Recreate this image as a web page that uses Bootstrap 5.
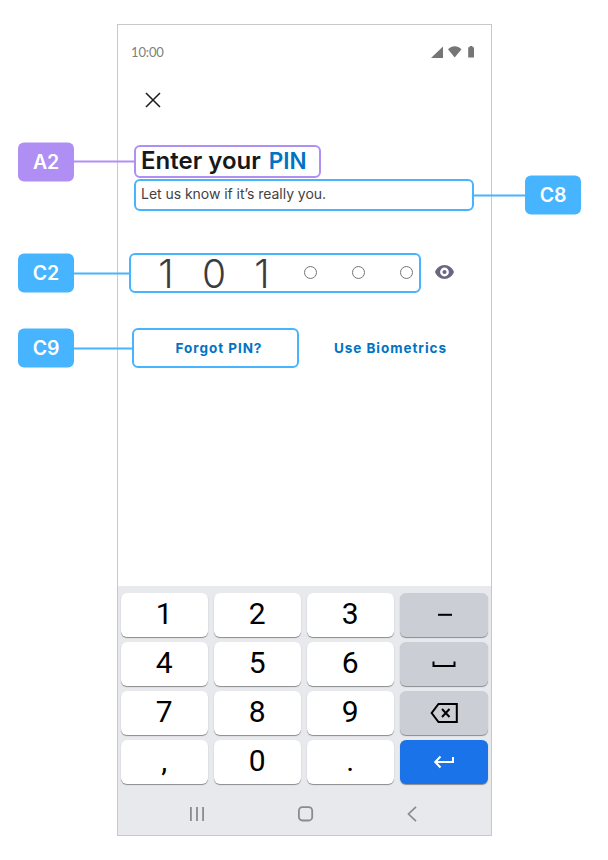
<!DOCTYPE html>
<html lang="en">
<head>
<meta charset="utf-8">
<meta name="viewport" content="width=device-width, initial-scale=1">
<title>Enter your PIN</title>
<link href="https://cdn.jsdelivr.net/npm/bootstrap@5.3.0/dist/css/bootstrap.min.css" rel="stylesheet">
<style>
  :root { --sky: #46b4ff; --violet: #b08ff5; --link: #0073c4; }
  body { font-family: Inter, "Liberation Sans", sans-serif; background: #fff; }
  svg { display: block; flex: none; }
  .page { width: 608px; height: 860px; padding: 24px 0 0 117px; overflow: hidden; }
  .phone { width: 375px; height: 812px; border: 1px solid #c8c8ca; }
  .status { height: 53px; padding: 0 16px 0 13px; color: #757575; }
  .clock { font: 400 13px/16px Lato, sans-serif; color: #808080; letter-spacing: -.15px; padding-top: 1px; }
  .close-btn { margin: 14px 0 0 27px; width: 16px; height: 16px; }
  .outlined { border: 2px solid var(--tone, var(--sky)); border-radius: 6px; }
  .violet { --tone: var(--violet); }
  .callout { top: 50%; transform: translateY(-50%); letter-spacing: -.1px; }
  .callout-start { right: 100%; }
  .callout-end { left: 100%; }
  .tag { width: 56px; height: 39px; border-radius: 6px; background: var(--tone, var(--sky)); color: #fff; font-size: 19.5px; font-weight: 600; line-height: 39px; text-align: center; }
  .wire { height: 2px; background: var(--tone, var(--sky)); }
  .w-62px { width: 62px; } .w-57px { width: 57px; } .w-53px { width: 53px; } .w-60px { width: 60px; }
  .heading { margin: 37px 0 0 16px; width: 187px; height: 33px; padding: 0 0 2px 5px; }
  .heading h1 { font-size: 24px; line-height: 28px; font-weight: 600; color: #18181a; }
  .heading .accent { font-size: 22.5px; line-height: 27px; color: var(--link); padding-left: 8px; }
  .hint { margin: 1px 0 0 16px; width: 340px; height: 32px; padding-left: 5px; font-size: 14px; letter-spacing: -.04px; line-height: 26px; color: #424244; }
  .pin-row { margin: 42px 0 0 11px; }
  .pin { width: 292px; height: 40px; padding-left: 11px; }
  .cell { flex: none; width: 48px; height: 36px; font-size: 39px; line-height: 38px; font-weight: 300; color: #3c3c3e; }
  .cell:nth-child(n+4) { height: 35px; }
  .cell:nth-child(6) { margin-right: -14px; }
  .dot { width: 13px; height: 13px; border: 1px solid #747474; border-radius: 50%; }
  .eye { margin-left: 14px; margin-bottom: 2px; }
  .actions { margin: 35px 0 0 14px; color: var(--link); font-size: 13.5px; font-weight: 700; letter-spacing: .95px; }
  .forgot { width: 167px; height: 40px; padding: 1px 0 0 7px; }
  .biometrics { margin-left: 35px; padding-top: 1px; }
  .keyboard { height: 249px; background: #e8e9ed; padding: 7px 3px 0; }
  .keys { display: grid; grid-template-columns: repeat(4, 88px); grid-auto-rows: 44px; gap: 5px; }
  .key { background: #fff; border-radius: 6px; box-shadow: 0 1px 1px #898a8d; color: #000; font: 400 30px/42px Roboto, sans-serif; text-align: center; }
  .key:not(.key-alt):not(.key-go) { padding-right: 1px; margin-right: .6px; }
  .key-alt { background: #cbced5; }
  .key-go { background: #1a73e8; }
  .android-nav { height: 59px; padding: 0 69px; }
</style>
</head>
<body>
<main class="page">
  <div class="phone d-flex flex-column">
    <div class="status d-flex align-items-center justify-content-between">
      <span class="clock">10:00</span>
      <svg width="44" height="12" viewBox="0 0 44 12" fill="#757575"><path d="M0 12 12 .5V12z"/><path d="M17 3.200C21-.7 26.500-.7 30.500 3.200L23.700 11.500z"/><path d="M37.200 1.200h1.500V0h2.800v1.200h1.500v10.300h-5.800z"/></svg>
    </div>
    <button type="button" class="close-btn btn p-0 border-0" aria-label="Close">
      <svg width="16" height="16" viewBox="0 0 16 16" fill="none" stroke="#1b1b1b" stroke-width="1.500"><path d="M1 1l14 14M15 1 1 15"/></svg>
    </button>

    <div class="heading outlined violet position-relative d-flex align-items-center">
      <h1 class="m-0 text-nowrap">Enter your</h1><h1 class="accent m-0">PIN</h1>
      <div class="callout callout-start position-absolute d-flex align-items-center"><span class="tag">A2</span><span class="wire w-62px"></span></div>
    </div>
    <div class="hint outlined position-relative">Let us know if it’s really you.
      <div class="callout callout-end position-absolute d-flex align-items-center"><span class="wire w-53px"></span><span class="tag">C8</span></div>
    </div>

    <div class="pin-row d-flex align-items-center">
      <div class="pin outlined position-relative d-flex">
        <span class="cell text-center">1</span><span class="cell text-center">0</span><span class="cell text-center">1</span>
        <span class="cell d-flex align-items-center justify-content-center"><i class="dot"></i></span>
        <span class="cell d-flex align-items-center justify-content-center"><i class="dot"></i></span>
        <span class="cell d-flex align-items-center justify-content-center"><i class="dot"></i></span>
        <div class="callout callout-start position-absolute d-flex align-items-center"><span class="tag">C2</span><span class="wire w-57px"></span></div>
      </div>
      <svg class="eye" width="19" height="14" viewBox="0 0 19 14"><path fill="#6b6680" fill-rule="evenodd" d="M9.500 0C5.200 0 1.500 2.900 0 7c1.500 4.100 5.200 7 9.500 7s8-2.900 9.500-7c-1.500-4.100-5.200-7-9.500-7zm0 11.400a4.400 4.400 0 1 1 0-8.800 4.400 4.400 0 0 1 0 8.800zm0-6.500a2.100 2.100 0 1 0 0 4.200 2.100 2.100 0 0 0 0-4.200z"/></svg>
    </div>

    <div class="actions d-flex align-items-center">
      <div class="forgot outlined position-relative d-flex align-items-center justify-content-center"><span>Forgot PIN?</span>
        <div class="callout callout-start position-absolute d-flex align-items-center"><span class="tag">C9</span><span class="wire w-60px"></span></div>
      </div>
      <span class="biometrics text-nowrap">Use Biometrics</span>
    </div>

    <div class="keyboard mt-auto">
      <div class="keys">
        <div class="key">1</div><div class="key">2</div><div class="key">3</div>
        <div class="key key-alt"><svg width="88" height="44" viewBox="0 0 88 44"><path d="M38 21.800h14" stroke="#000" stroke-width="2"/></svg></div>
        <div class="key">4</div><div class="key">5</div><div class="key">6</div>
        <div class="key key-alt"><svg width="88" height="44" viewBox="0 0 88 44" fill="none" stroke="#000" stroke-width="2"><path d="M33.500 19.500v4.500h21v-4.500"/></svg></div>
        <div class="key">7</div><div class="key">8</div><div class="key">9</div>
        <div class="key key-alt"><svg width="88" height="44" viewBox="0 0 88 44" fill="none" stroke="#000" stroke-width="2"><path d="M38.500 13h18.300v18H38.500L31.700 22zM42 18l7.500 8M49.500 18 42 26"/></svg></div>
        <div class="key">,</div><div class="key">0</div><div class="key">.</div>
        <div class="key key-go"><svg width="88" height="44" viewBox="0 0 88 44" fill="none" stroke="#fff" stroke-width="2"><path d="M53 17v5H35.500M40.500 16.500 35.200 22l5.300 5.500"/></svg></div>
      </div>
      <div class="android-nav d-flex align-items-center justify-content-between">
        <svg width="14" height="14" viewBox="0 0 14 14" stroke="#8b8b8d" stroke-width="1.800"><path d="M.9 0v14M7 0v14M13.100 0v14"/></svg>
        <svg width="16" height="16" viewBox="0 0 16 16" fill="none" stroke="#8b8b8d" stroke-width="1.800"><rect x=".9" y="1.200" width="13.300" height="13.300" rx="3.500"/></svg>
        <svg width="12" height="16" viewBox="0 0 12 16" fill="none" stroke="#8b8b8d" stroke-width="1.700"><path d="M9 .8 1.500 8 9 15.200"/></svg>
      </div>
    </div>
  </div>
</main>
<script src="https://cdn.jsdelivr.net/npm/bootstrap@5.3.0/dist/js/bootstrap.bundle.min.js"></script>
</body>
</html>
